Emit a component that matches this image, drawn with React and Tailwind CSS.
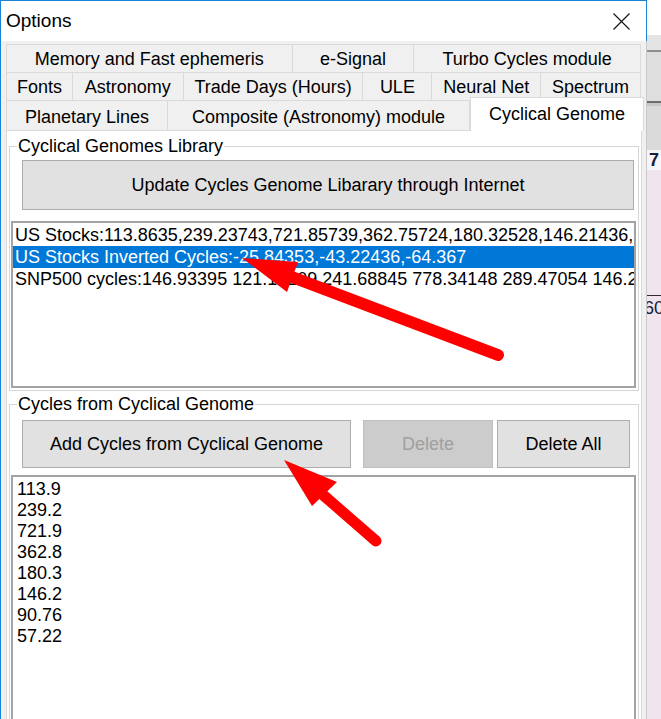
import React from 'react';

const tabRows = [
  [
    { label: 'Memory and Fast ephemeris', w: 'w-[286px]' },
    { label: 'e-Signal', w: 'w-[122px]' },
    { label: 'Turbo Cycles module', w: 'w-[227px]' },
  ],
  [
    { label: 'Fonts', w: 'w-[66px]' },
    { label: 'Astronomy', w: 'w-[111px]' },
    { label: 'Trade Days (Hours)', w: 'w-[180px]' },
    { label: 'ULE', w: 'w-[69px]' },
    { label: 'Neural Net', w: 'w-[109px]' },
    { label: 'Spectrum', w: 'w-[100px]' },
  ],
];

const libraryItems = [
  'US Stocks:113.8635,239.23743,721.85739,362.75724,180.32528,146.21436,90.76',
  'US Stocks Inverted Cycles:-25.84353,-43.22436,-64.367',
  'SNP500 cycles:146.93395 121.15209 241.68845 778.34148 289.47054 146.2',
];

const cycles = ['113.9', '239.2', '721.9', '362.8', '180.3', '146.2', '90.76', '57.22'];

const Tab = ({ label, w }) => (
  <div className={`${w} h-full flex items-center justify-center border-t border-r border-[#dadada] bg-[#f0f0f0] whitespace-nowrap`}>
    {label}
  </div>
);

const Button = ({ children, className = '', disabled }) => (
  <div
    className={`flex items-center justify-center border whitespace-nowrap ${
      disabled ? 'bg-[#cccccc] border-[#bfbfbf] text-[#a0a0a0]' : 'bg-[#e1e1e1] border-[#adadad]'
    } ${className}`}
  >
    {children}
  </div>
);

const Arrows = () => (
  <svg className="absolute inset-0 pointer-events-none" width="661" height="719" viewBox="0 0 661 719">
    <line x1="498" y1="355" x2="292" y2="277" stroke="#fe0000" strokeWidth="12" strokeLinecap="round" />
    <polygon points="242,258 298,262 287,292" fill="#fe0000" />
    <line x1="376" y1="541" x2="322" y2="494" stroke="#fe0000" strokeWidth="11" strokeLinecap="round" />
    <polygon points="284,460 337,482 312,506" fill="#fe0000" />
  </svg>
);

export default function App() {
  return (
    <div className="relative w-[661px] h-[719px] overflow-hidden flex bg-white text-black text-[18px] leading-[20px] font-['Liberation_Sans',Arial,sans-serif]">
      {/* dialog window */}
      <div className="w-[647px] shrink-0 h-full flex flex-col border-l border-[#1883d7]">
        <div className="h-[41px] shrink-0 bg-white border-t border-r border-[#1883d7] flex items-center justify-between pl-[5px] pr-[16px]">
          <span className="text-[19px]">Options</span>
          <svg width="17" height="17" viewBox="0 0 17 17">
            <path d="M0.5 0.5 L16.5 16.5 M16.5 0.5 L0.5 16.5" stroke="#111" strokeWidth="1.1" />
          </svg>
        </div>

        <div className="flex-1 flex flex-col bg-[#f0f0f0] border-r border-[#c9c9c9] pl-[5px] pt-[3px]">
          {tabRows.map((row, i) => (
            <div key={i} className="h-[28px] flex border-l border-[#dadada] w-[635px]">
              {row.map(t => <Tab key={t.label} {...t} />)}
            </div>
          ))}
          <div className="h-[30px] flex items-start">
            <div className="w-[162px] h-full flex items-center justify-center border-t border-l border-r border-[#dadada] pt-[2px]">Planetary Lines</div>
            <div className="w-[302px] h-full flex items-center justify-center border-t border-r border-[#dadada] pt-[2px]">Composite (Astronomy) module</div>
            <div className="relative z-10 w-[174px] h-[34px] -mt-[3px] flex items-center justify-center bg-white border-t border-l border-r border-[#dadada] pb-[2px]">Cyclical Genome</div>
          </div>

          {/* tab page */}
          <div className="w-[636px] flex-1 bg-white border border-[#dadada] flex flex-col">
            <fieldset className="min-w-0 mt-[5px] mx-[2px] border border-[#d6d6d6] pb-[2px]">
              <legend className="ml-[7px] px-[1px] leading-[20px]">Cyclical Genomes Library</legend>
              <Button className="mt-[4px] ml-[12px] mr-[4px] h-[50px]">Update Cycles Genome Libarary through Internet</Button>
              <div className="mt-[11px] ml-[1px] mr-[2px] h-[167px] border-2 border-[#a3a3a3] pt-[1px] overflow-hidden">
                {libraryItems.map((item, i) => (
                  <div
                    key={item}
                    className={`h-[22px] leading-[22px] pl-[2px] whitespace-nowrap overflow-hidden ${i === 1 ? 'bg-[#0078d7] text-white' : ''}`}
                  >
                    {item}
                  </div>
                ))}
              </div>
            </fieldset>

            <fieldset className="min-w-0 mt-[3px] mx-[2px] border border-[#d6d6d6] flex-1">
              <legend className="ml-[7px] px-[1px] leading-[20px]">Cycles from Cyclical Genome</legend>
              <div className="mt-[6px] ml-[12px] flex">
                <Button className="w-[329px] h-[48px]">Add Cycles from Cyclical Genome</Button>
                <Button disabled className="ml-[12px] w-[130px] h-[48px]">Delete</Button>
                <Button className="ml-[4px] w-[133px] h-[48px]">Delete All</Button>
              </div>
              <div className="mt-[7px] ml-[1px] mr-[2px] h-[300px] border-2 border-[#a3a3a3] pt-[2px] pl-[4px]">
                {cycles.map(c => (
                  <div key={c} className="h-[21px] leading-[21px]">{c}</div>
                ))}
              </div>
            </fieldset>
          </div>
        </div>
      </div>

      {/* background application peeking out on the right */}
      <div className="flex-1 flex flex-col overflow-hidden bg-[#f0e4ef]">
        <div className="h-[35px] bg-white" />
        <div className="h-[15px] bg-[#e4e4e4]" />
        <div className="h-[2px] bg-[#8e8e8e]" />
        <div className="h-[49px] bg-[#dedede]" />
        <div className="h-[2px] bg-[#6e6e6e]" />
        <div className="h-[3px] bg-[#c8c8c8]" />
        <div className="h-[44px] bg-[#dadada]" />
        <div className="h-[20px] bg-[#f7f5f8] pl-[2px] font-bold text-[#15203a] leading-[20px]">7</div>
        <div className="h-[125px]" />
        <div className="h-[1px] bg-[#2e2e2e]" />
        <div className="h-[24px] -ml-[3px] text-[#15203a] leading-[24px] whitespace-nowrap">60</div>
      </div>

      <Arrows />
    </div>
  );
}
